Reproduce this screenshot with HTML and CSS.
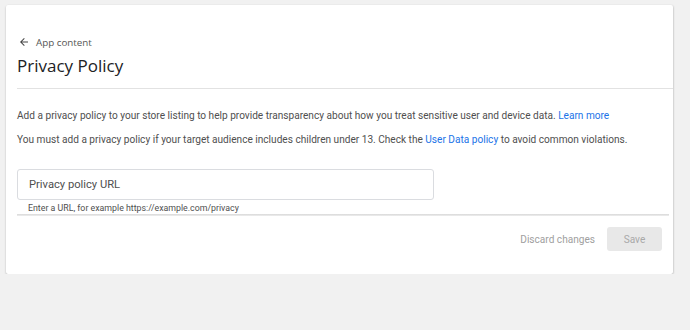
FILE: index.html
```html
<!DOCTYPE html>
<html>
<head>
<meta charset="utf-8">
<link rel="stylesheet" href="styles.css">
</head>
<body>
<div class="card">
  <div class="header">
    <div class="back">
      <svg class="back-icon" viewBox="0 0 24 24" width="12" height="12"><path d="M20 11H7.83l5.59-5.59L12 4l-8 8 8 8 1.41-1.41L7.83 13H20v-2z" fill="#444"/></svg>
      <span>App content</span>
    </div>
    <h1 class="title">Privacy Policy</h1>
  </div>
  <div class="body">
    <p class="para">Add a privacy policy to your store listing to help provide transparency about how you treat sensitive user and device data. <a class="link">Learn more</a></p>
    <p class="para second">You must add a privacy policy if your target audience includes children under 13. Check the <a class="link">User Data policy</a> to avoid common violations.</p>
    <div class="field">
      <div class="input"><span class="placeholder">Privacy policy URL</span></div>
      <div class="helper">Enter a URL, for example https://example.com/privacy</div>
    </div>
  </div>
  <div class="footer">
    <div class="shade"></div>
    <div class="actions">
      <span class="discard">Discard changes</span>
      <span class="save">Save</span>
    </div>
  </div>
</div>
</body>
</html>
```
FILE: styles.css
```css
html, body {
  margin: 0;
  padding: 0;
  background: #f1f1f1;
  font-family: Roboto, "Liberation Sans", sans-serif;
}
body {
  padding: 5px 17px 0 6px;
}
.card {
  background: #fff;
  width: 667px;
  height: 269px;
  box-shadow: 0 1px 2px rgba(0,0,0,0.25), 1px 0 2px rgba(0,0,0,0.06);
  border-radius: 2px;
  box-sizing: border-box;
}
.header {
  margin-left: 11px;
  padding-top: 29px;
  padding-bottom: 10px;
  border-bottom: 1px solid #e2e2e2;
}
.back {
  display: flex;
  align-items: center;
  height: 16px;
  font-family: "Open Sans", Roboto, sans-serif;
  font-size: 9.8px;
  color: #555;
}
.back-icon {
  margin-left: 1px;
  margin-right: 6px;
}
.title {
  margin: 4px 0 0 0;
  height: 24px;
  line-height: 24px;
  font-family: "Open Sans", Roboto, sans-serif;
  font-weight: 500;
  font-size: 17px;
  color: #202124;
}
.body {
  padding: 19px 11px 0 11px;
}
.para {
  margin: 0;
  font-size: 10.1px;
  line-height: 16px;
  color: #4f4f4f;
  white-space: nowrap;
}
.second {
  margin-top: 8px;
}
.link {
  color: #1a73e8;
  text-decoration: none;
}
.field {
  margin-top: 21px;
}
.input {
  width: 417px;
  height: 31px;
  box-sizing: border-box;
  border: 1px solid #dadce0;
  border-radius: 3px;
  display: flex;
  align-items: center;
  padding-left: 11px;
}
.placeholder {
  font-size: 11.2px;
  color: #4f4f4f;
}
.helper {
  margin-top: 2px;
  padding-left: 11px;
  height: 12px;
  line-height: 12px;
  font-size: 8.8px;
  color: #4f4f4f;
}
.footer {
  padding: 0 11px 0 11px;
}
.shade {
  height: 2px;
  margin-right: -7px;
  background: linear-gradient(#d8d8d8, #eeeeee);
}
.actions {
  display: flex;
  justify-content: flex-end;
  align-items: center;
  gap: 12px;
  padding-top: 11px;
}
.discard {
  font-size: 10.1px;
  color: #a0a0a0;
}
.save {
  width: 55px;
  height: 24px;
  border-radius: 3px;
  background: #e8e8e8;
  color: #a8a8a8;
  font-size: 10.1px;
  display: flex;
  align-items: center;
  justify-content: center;
}
```
